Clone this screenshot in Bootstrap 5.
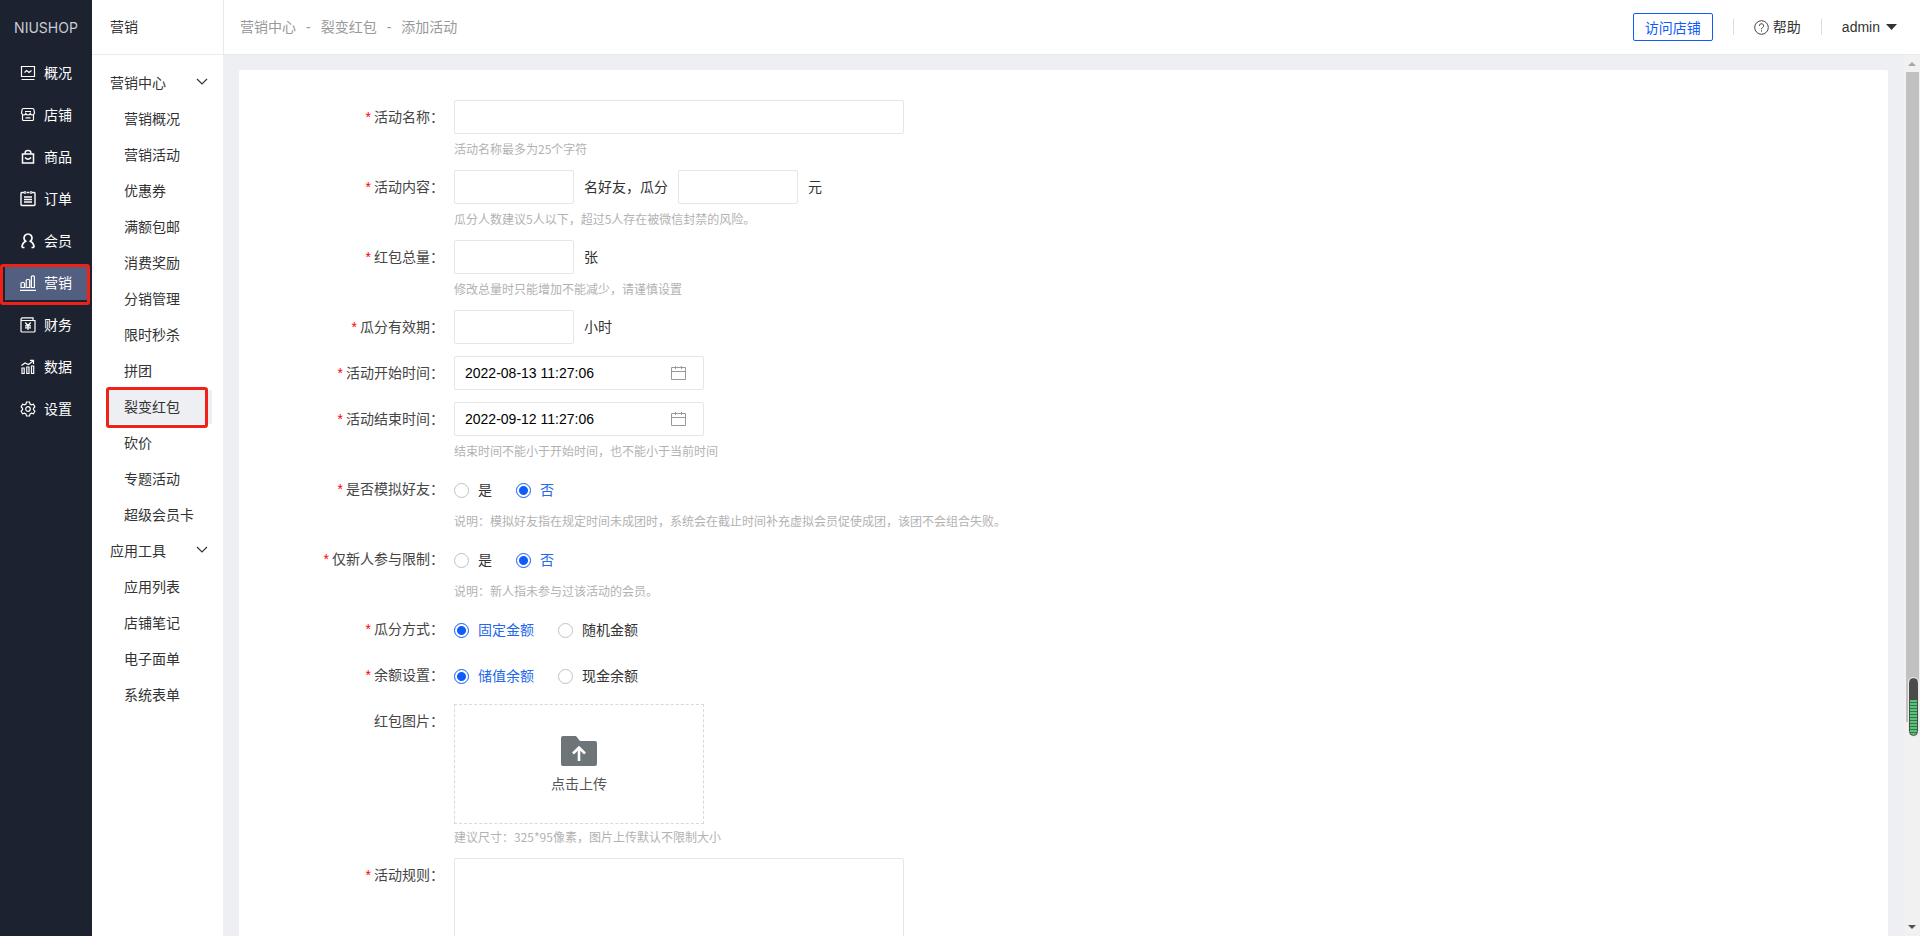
<!DOCTYPE html>
<html lang="zh-CN">
<head>
<meta charset="utf-8">
<meta name="viewport" content="width=device-width, initial-scale=1">
<title>添加活动 - NIUSHOP</title>
<link href="https://cdn.jsdelivr.net/npm/bootstrap@5.3.0/dist/css/bootstrap.min.css" rel="stylesheet">
<style>
:root{--brand:#105cfb;--line:#e6e6e6;--page:#edeff2;--ink:#333}
body{font-family:"Liberation Sans","Noto Sans CJK SC",sans-serif;font-size:14px;line-height:18px;color:var(--ink)}
a{color:inherit;text-decoration:none}
.shell{height:100vh}
/* primary navigation */
.side-main{width:92px;background:#1c2230;color:#fff}
.brand-name{height:56px;font-family:Inter,sans-serif;font-size:14px;color:#c9ccd4}
.side-main .nav-item a{height:34px;margin:0 5px 8px;padding-left:15px;gap:8px}
.side-main .active{background:#535f80}
.side-main svg{width:16px;height:16px;fill:none;stroke:#fff;stroke-width:1.2}
.hot{position:relative}
.hot::after{content:"";position:absolute;border:3px solid #ee2219;border-radius:3px;pointer-events:none}
.side-main .hot::after{inset:-2px -3px -5px -5px}
/* secondary navigation */
.side-sub{width:131px}
.topline{height:55px;border-bottom:1px solid #e9eaec}
.side-sub .topline{padding-left:18px}
.sub-list{padding-top:10px}
.sub-list summary{height:36px;padding:0 15px 0 18px;list-style:none}
.sub-list svg{width:12px;height:8px;margin-bottom:2px}
.sub-list a{height:36px;margin:0 11px 0 15px;padding:1px 0;text-indent:17px;background-clip:content-box}
.sub-list .active{background-color:var(--page)}
.sub-list .hot::after{inset:-2px 4px -3px -1px}
/* top bar */
.topbar{padding:0 23px 0 16px;border-left:1px solid #e9eaec}
.crumbs{--bs-breadcrumb-item-padding-x:10px;--bs-breadcrumb-divider:"-";--bs-breadcrumb-divider-color:#999;--bs-breadcrumb-item-active-color:#999;color:#999}
.btn-visit{width:80px;height:28px;border:1px solid var(--brand);border-radius:2px;color:var(--brand);font-size:14px;line-height:18px;padding:2px 0 0}
.bar{width:1px;height:16px;background:#ddd;margin:0 20px}
.user-menu{gap:6px}
.caret{width:11px;height:6px}
/* form panel */
.work{background:var(--page);padding-left:16px}
.panel{margin:15px 16px 0 0;padding-top:30px;background:#fff;border-radius:2px 2px 0 0}
.field{display:flex;margin-bottom:12px}
.field-name{width:205px;height:34px;flex:none;text-align:right;line-height:34px;color:#454545}
.must::before{content:"*";color:#f00;margin-right:3px}
.field-body{padding-left:10px}
.form-control{height:34px;border:1px solid var(--line);border-radius:2px;padding:0 10px;font-size:14px;color:#000;max-width:100%}
.w-long{width:450px}.w-short{width:120px}.w-date{width:250px}
.unit-row{display:flex;align-items:center;gap:10px}
.hint{font-family:"Noto Sans CJK SC",sans-serif;font-size:12px;line-height:18px;color:#b2b2b2;margin-top:6px}
.form-check-input{width:15px;height:15px;margin:0;border:1px solid #c2c2c2;box-shadow:none}
.form-check-input:checked{background:radial-gradient(circle,var(--brand) 4px,#fff 5px);border-color:var(--brand)}
.form-check-input:checked + label{color:#2467e8}
.opts{height:34px;gap:24px;padding-top:2px}
.opts span{display:flex;align-items:center;gap:9px}
.date-icon{position:absolute;right:18px;top:10px;width:15px;height:14px}
.upload{width:250px;height:120px;border:1px dashed #d9d9d9;background:#fff;color:#555;gap:9px}
.upload svg{width:36px;height:30px}
.upload + .hint{margin-top:4px}
.rules-box{height:170px}
/* scroll rail */
.rail{width:16px;background:#f1f1f1;padding:7px 0}
.rail-thumb{width:13px;height:75%;margin:6px 0 auto;background:#c1c1c1}
.rail svg{width:8px;height:4px}
.meter{position:absolute;right:2px;top:623px;width:9px;height:58px;border-radius:5px;border:1px solid #4b4b4b;background:linear-gradient(#4b4b4b 38%,transparent 38%),repeating-linear-gradient(#58c478 0 2px,#37744b 2px 3px);box-shadow:0 0 0 1px #e6ebeb}
</style>
</head>
<body>
<div class="shell d-flex overflow-hidden">
  <nav class="side-main flex-shrink-0" aria-label="主导航">
    <div class="brand-name d-flex align-items-center justify-content-center">NIUSHOP</div>
    <ul class="nav flex-column flex-nowrap">
      <li class="nav-item"><a href="#" class="d-flex align-items-center"><svg viewBox="0 0 16 16"><path d="M1.500 1.500h13v10h-13zM1.500 14.500h13M4.500 7.500l2.200-2 2.300 2L11.500 5.500"/></svg>概况</a></li>
      <li class="nav-item"><a href="#" class="d-flex align-items-center"><svg viewBox="0 0 16 16"><path d="M3.500 1.500h9q1.500 0 1.500 1.500l.5 3q-.5 2-2.200 2T10.200 6.500Q9.500 8 8 8T5.800 6.500Q5.200 8 3.700 8T1.500 6L2 3q0-1.500 1.500-1.500zM2.500 8v4.500q0 1 1 1h9q1 0 1-1V8M5 4.500h6M5.500 10.800h5"/></svg>店铺</a></li>
      <li class="nav-item"><a href="#" class="d-flex align-items-center"><svg viewBox="0 0 16 16"><path d="M2.500 5h11v9h-11zM5.200 5V3.500q0-2 2.800-2t2.800 2V5M5 8.500q3 3.500 6 0" stroke-width="1.500"/></svg>商品</a></li>
      <li class="nav-item"><a href="#" class="d-flex align-items-center"><svg viewBox="0 0 16 16"><path d="M4 1.500H2Q1 1.500 1 2.500v11q0 1 1 1h12q1 0 1-1v-11q0-1-1-1h-2M5 0v3M11 0v3M6.500 1.500h3M4 6h8M4 8.500h8M4 11h8" stroke-width="1.400"/></svg>订单</a></li>
      <li class="nav-item"><a href="#" class="d-flex align-items-center"><svg viewBox="0 0 16 16"><path d="M2 14.500q0-4.500 3.600-6.300A4 4 0 1 1 10.400 8.200Q14 10 14 14.500M2 14.500h2.500M14 14.500h-2.500" stroke-width="1.700"/></svg>会员</a></li>
      <li class="nav-item"><a href="#" class="d-flex align-items-center active hot" aria-current="page"><svg viewBox="0 0 16 16"><path d="M0 15.300h16M2 7.500h1.500q1 0 1 1v4H1v-4q0-1 1-1zM7.200 4.500h1.500q1 0 1 1v7H6.200v-7q0-1 1-1zM12.400.8h1q1 0 1 1v10.700h-3V1.800q0-1 1-1z"/></svg>营销</a></li>
      <li class="nav-item"><a href="#" class="d-flex align-items-center"><svg viewBox="0 0 16 16"><path d="M1 2.200V14q0 1 1 1h12q1 0 1-1V3.500H2.500Q1 3.500 1 2.200T2.500.8H13v2.500M5.200 5.500L8 8.500l2.800-3M5 8.800h6M5 10.800h6M8 8.500V13"/></svg>财务</a></li>
      <li class="nav-item"><a href="#" class="d-flex align-items-center"><svg viewBox="0 0 16 16"><path d="M2 9h2.200v5.500H2zM6.800 8H9v6.500H6.800zM11.500 7h2.200v7.500h-2.200zM1.500 6.500L5 4l3.500 1.500L13 2M10 1.300h3.500V5"/></svg>数据</a></li>
      <li class="nav-item"><a href="#" class="d-flex align-items-center"><svg viewBox="0 0 16 16"><path d="M6.500 1h3l.5 2 1.400.8 2-.6 1.500 2.700L13.500 7.300v1.500l1.400 1.400-1.500 2.600-2-.6-1.400.9-.5 1.900h-3L6 13.100l-1.400-.9-2 .6-1.500-2.600 1.400-1.400V7.300L1.100 5.900l1.500-2.700 2 .6L6 3z"/><circle cx="8" cy="8" r="2.300"/></svg>设置</a></li>
    </ul>
  </nav>

  <aside class="side-sub flex-shrink-0 bg-white">
    <div class="topline d-flex align-items-center">营销</div>
    <nav class="sub-list" aria-label="营销">
      <details open>
        <summary class="d-flex align-items-center justify-content-between">营销中心<svg viewBox="0 0 12 8"><path d="M1 1l5 5 5-5" fill="none" stroke="#333" stroke-width="1.200"/></svg></summary>
        <a href="#" class="d-flex align-items-center">营销概况</a>
        <a href="#" class="d-flex align-items-center">营销活动</a>
        <a href="#" class="d-flex align-items-center">优惠券</a>
        <a href="#" class="d-flex align-items-center">满额包邮</a>
        <a href="#" class="d-flex align-items-center">消费奖励</a>
        <a href="#" class="d-flex align-items-center">分销管理</a>
        <a href="#" class="d-flex align-items-center">限时秒杀</a>
        <a href="#" class="d-flex align-items-center">拼团</a>
        <a href="#" class="d-flex align-items-center active hot" aria-current="page">裂变红包</a>
        <a href="#" class="d-flex align-items-center">砍价</a>
        <a href="#" class="d-flex align-items-center">专题活动</a>
        <a href="#" class="d-flex align-items-center">超级会员卡</a>
      </details>
      <details open>
        <summary class="d-flex align-items-center justify-content-between">应用工具<svg viewBox="0 0 12 8"><path d="M1 1l5 5 5-5" fill="none" stroke="#333" stroke-width="1.200"/></svg></summary>
        <a href="#" class="d-flex align-items-center">应用列表</a>
        <a href="#" class="d-flex align-items-center">店铺笔记</a>
        <a href="#" class="d-flex align-items-center">电子面单</a>
        <a href="#" class="d-flex align-items-center">系统表单</a>
      </details>
    </nav>
  </aside>

  <div class="flex-grow-1 d-flex flex-column overflow-hidden">
    <header class="topline topbar d-flex align-items-center justify-content-between flex-shrink-0">
      <ol class="breadcrumb crumbs mb-0">
        <li class="breadcrumb-item"><a href="#">营销中心</a></li>
        <li class="breadcrumb-item"><a href="#">裂变红包</a></li>
        <li class="breadcrumb-item active" aria-current="page">添加活动</li>
      </ol>
      <div class="d-flex align-items-center">
        <button type="button" class="btn btn-visit">访问店铺</button>
        <i class="bar"></i>
        <a href="#" class="d-flex align-items-center gap-1"><svg width="15" height="15" viewBox="0 0 15 15" fill="none" stroke="#444"><circle cx="7.500" cy="7.500" r="6.800"/><path d="M5.400 5.900a2.100 2.100 0 1 1 3.200 1.700Q7.500 8.200 7.500 9.300M7.500 10.300v1.300"/></svg>帮助</a>
        <i class="bar"></i>
        <a href="#" class="user-menu d-flex align-items-center">admin<svg class="caret" viewBox="0 0 11 6"><path d="M0 0h11L5.500 6z" fill="#333"/></svg></a>
      </div>
    </header>

    <div class="work position-relative flex-grow-1 d-flex overflow-hidden">
      <form class="panel flex-grow-1">
        <div class="field"><label class="field-name must" for="act">活动名称：</label><div class="field-body"><input class="form-control w-long" id="act" type="text"><div class="hint">活动名称最多为25个字符</div></div></div>
        <div class="field"><label class="field-name must" for="people">活动内容：</label><div class="field-body"><div class="unit-row"><input class="form-control w-short" id="people" type="text"><label for="people">名好友，瓜分</label><input class="form-control w-short" id="money" type="text" aria-label="瓜分金额"><label for="money">元</label></div><div class="hint">瓜分人数建议5人以下，超过5人存在被微信封禁的风险。</div></div></div>
        <div class="field"><label class="field-name must" for="total">红包总量：</label><div class="field-body"><div class="unit-row"><input class="form-control w-short" id="total" type="text"><span>张</span></div><div class="hint">修改总量时只能增加不能减少，请谨慎设置</div></div></div>
        <div class="field"><label class="field-name must" for="valid">瓜分有效期：</label><div class="field-body unit-row"><input class="form-control w-short" id="valid" type="text"><span>小时</span></div></div>
        <div class="field"><label class="field-name must" for="start">活动开始时间：</label><div class="field-body"><div class="position-relative w-date"><input class="form-control w-date" id="start" type="text" value="2022-08-13 11:27:06"><svg class="date-icon" viewBox="0 0 15 14" fill="none" stroke="#999"><path d="M.5 1.500h14v12H.5zM.5 5.500h14M4.500 0v3M10.500 0v3"/></svg></div></div></div>
        <div class="field"><label class="field-name must" for="end">活动结束时间：</label><div class="field-body"><div class="position-relative w-date"><input class="form-control w-date" id="end" type="text" value="2022-09-12 11:27:06"><svg class="date-icon" viewBox="0 0 15 14" fill="none" stroke="#999"><path d="M.5 1.500h14v12H.5zM.5 5.500h14M4.500 0v3M10.500 0v3"/></svg></div><div class="hint">结束时间不能小于开始时间，也不能小于当前时间</div></div></div>
        <div class="field" role="radiogroup" aria-labelledby="l1"><div class="field-name must" id="l1">是否模拟好友：</div><div class="field-body"><div class="opts d-flex align-items-center"><span><input class="form-check-input" type="radio" name="sim" id="sim1"><label for="sim1">是</label></span><span><input class="form-check-input" type="radio" name="sim" id="sim0" checked><label for="sim0">否</label></span></div><div class="hint">说明：模拟好友指在规定时间未成团时，系统会在截止时间补充虚拟会员促使成团，该团不会组合失败。</div></div></div>
        <div class="field" role="radiogroup" aria-labelledby="l2"><div class="field-name must" id="l2">仅新人参与限制：</div><div class="field-body"><div class="opts d-flex align-items-center"><span><input class="form-check-input" type="radio" name="fresh" id="fresh1"><label for="fresh1">是</label></span><span><input class="form-check-input" type="radio" name="fresh" id="fresh0" checked><label for="fresh0">否</label></span></div><div class="hint">说明：新人指未参与过该活动的会员。</div></div></div>
        <div class="field" role="radiogroup" aria-labelledby="l3"><div class="field-name must" id="l3">瓜分方式：</div><div class="field-body"><div class="opts d-flex align-items-center"><span><input class="form-check-input" type="radio" name="split" id="split0" checked><label for="split0">固定金额</label></span><span><input class="form-check-input" type="radio" name="split" id="split1"><label for="split1">随机金额</label></span></div></div></div>
        <div class="field" role="radiogroup" aria-labelledby="l4"><div class="field-name must" id="l4">余额设置：</div><div class="field-body"><div class="opts d-flex align-items-center"><span><input class="form-check-input" type="radio" name="bal" id="bal0" checked><label for="bal0">储值余额</label></span><span><input class="form-check-input" type="radio" name="bal" id="bal1"><label for="bal1">现金余额</label></span></div></div></div>
        <div class="field"><div class="field-name">红包图片：</div><div class="field-body"><button type="button" class="upload d-flex flex-column align-items-center justify-content-center p-0"><svg viewBox="0 0 36 30"><path d="M2 0h13l4 5h15q2 0 2 2v21q0 2-2 2H2q-2 0-2-2V2Q0 0 2 0z" fill="#6e7578"/><path d="M18 25V12M12 17.500l6-6 6 6" fill="none" stroke="#fff" stroke-width="2.600"/></svg>点击上传</button><div class="hint">建议尺寸：325*95像素，图片上传默认不限制大小</div></div></div>
        <div class="field"><label class="field-name must" for="rules">活动规则：</label><div class="field-body"><textarea class="form-control w-long rules-box" id="rules"></textarea></div></div>
      </form>
      <div class="rail flex-shrink-0 d-flex flex-column align-items-center" aria-hidden="true">
        <svg viewBox="0 0 8 4"><path d="M4 0l4 4H0z" fill="#a3a3a3"/></svg>
        <div class="rail-thumb"></div>
        <svg viewBox="0 0 8 4"><path d="M0 0h8L4 4z" fill="#505050"/></svg>
      </div>
      <div class="meter" aria-hidden="true"></div>
    </div>
  </div>
</div>
<script src="https://cdn.jsdelivr.net/npm/bootstrap@5.3.0/dist/js/bootstrap.bundle.min.js"></script>
</body>
</html>
